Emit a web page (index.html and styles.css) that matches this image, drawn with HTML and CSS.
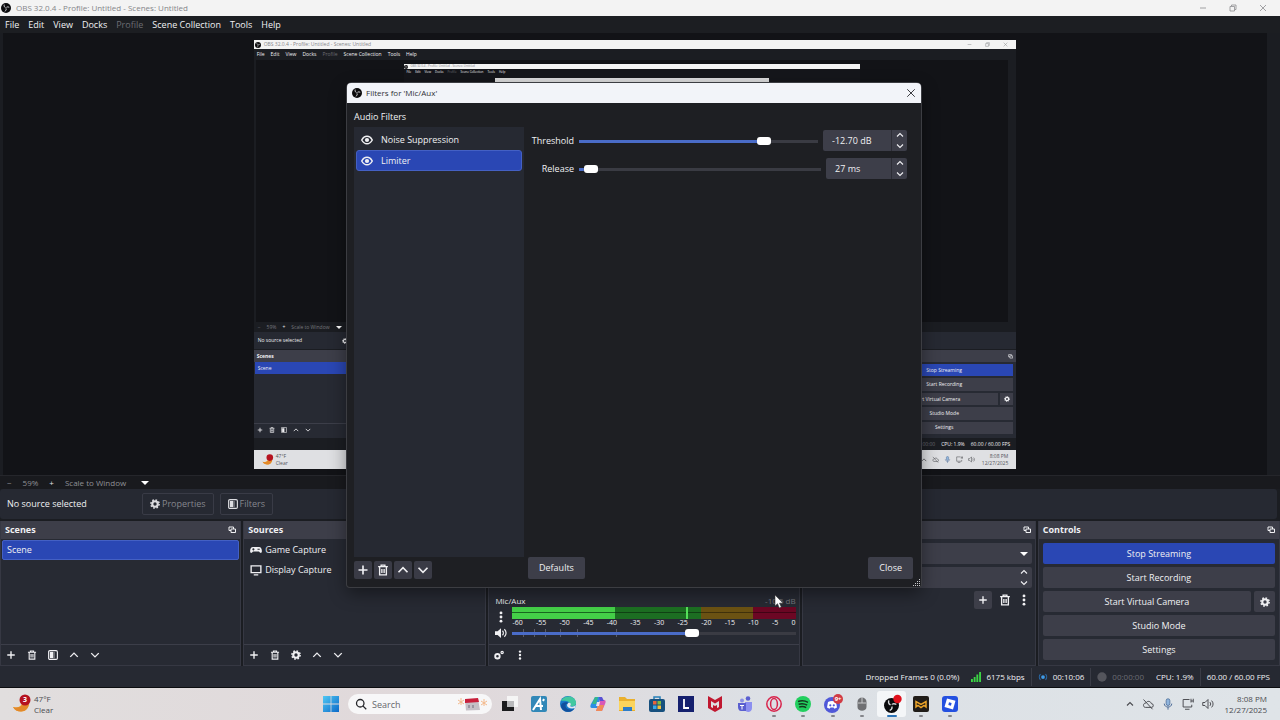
FILE: index.html
```
<!DOCTYPE html>
<html lang="en">
<head>
  <meta charset="UTF-8">
  <meta name="viewport" content="width=device-width, initial-scale=1.0">
  <title>OBS 32.0.4 - Profile: Untitled - Scenes: Untitled</title>
  <link rel="stylesheet" href="styles.css">
</head>
<body>

<!-- shared icons -->
<svg class="defs" aria-hidden="true">
  <symbol id="obs" viewBox="0 0 16 16"><circle cx="8" cy="8" r="8" fill="#0b0b0d"/><g fill="none" stroke="#d8d8dc" stroke-width="1.5" stroke-linecap="round"><path d="M5 3.2c-.6 2.4.6 4 3 4.4"/><path d="M12.6 6.6c-2.2-1-4-.4-4.8 1.4"/><path d="M6.6 13c1.8-1 2.4-2.800 1.400-4.800"/></g><circle cx="8" cy="8" r="1.300" fill="#0b0b0d"/></symbol>
  <symbol id="plus" viewBox="0 0 16 16"><path d="M8 2v12M2 8h12" stroke="currentColor" stroke-width="2.200" fill="none"/></symbol>
  <symbol id="trash" viewBox="0 0 16 16"><path d="M1.500 3.500h13M5.500 3V1.500h5V3M3.500 4v10.500h9V4M6.500 6.500v5.500M9.500 6.500v5.500" stroke="currentColor" stroke-width="1.800" fill="none"/></symbol>
  <symbol id="up" viewBox="0 0 16 16"><path d="M2 11l6-6 6 6" stroke="currentColor" stroke-width="2.200" fill="none"/></symbol>
  <symbol id="down" viewBox="0 0 16 16"><path d="M2 5l6 6 6-6" stroke="currentColor" stroke-width="2.200" fill="none"/></symbol>
  <symbol id="gear" viewBox="0 0 16 16"><circle cx="8" cy="8" r="4.400" fill="none" stroke="currentColor" stroke-width="3.400"/><circle cx="8" cy="8" r="6.600" fill="none" stroke="currentColor" stroke-width="2.400" stroke-dasharray="2.600 2.580"/></symbol>
  <symbol id="filter" viewBox="0 0 16 16"><rect x="1" y="1" width="14" height="14" rx="2" fill="none" stroke="currentColor" stroke-width="1.800"/><path d="M3 3h5v10H3z" fill="currentColor"/><path d="M8 3h3v10H8z" fill="currentColor" opacity=".4"/></symbol>
  <symbol id="dots" viewBox="0 0 16 16"><g fill="currentColor"><circle cx="8" cy="2.500" r="1.900"/><circle cx="8" cy="8" r="1.900"/><circle cx="8" cy="13.500" r="1.900"/></g></symbol>
  <symbol id="float" viewBox="0 0 16 16"><path d="M11 6V2H2v7h4M6 6h9v7H6z" stroke="currentColor" stroke-width="2" fill="none"/></symbol>
  <symbol id="eye" viewBox="0 0 16 16"><path d="M1 8c1.800-3.500 4-5 7-5s5.200 1.500 7 5c-1.800 3.500-4 5-7 5s-5.200-1.500-7-5z" fill="none" stroke="currentColor" stroke-width="2"/><circle cx="8" cy="8" r="2.800" fill="currentColor"/></symbol>
  <symbol id="close" viewBox="0 0 16 16"><path d="M2 2l12 12M14 2L2 14" stroke="currentColor" stroke-width="1.500"/></symbol>
  <symbol id="min" viewBox="0 0 16 16"><path d="M2 8h12" stroke="currentColor" stroke-width="1.500"/></symbol>
  <symbol id="max" viewBox="0 0 16 16"><path d="M5 4V2h9v9h-2M2 5h9v9H2z" fill="none" stroke="currentColor" stroke-width="1.500"/></symbol>
  <symbol id="moon" viewBox="0 0 20 20"><path d="M17 7c.8 6-2.500 10.500-8 10.500C5.500 17.500 2.500 16 1 13c5 1.500 9-.5 10-7z" fill="#f0a02c"/><path d="M1 13c5 1.500 9-.5 10-3 2 1.500 4 .5 6-1-.4 5-3.500 8.500-8 8.500C5.500 17.500 2.500 16 1 13z" fill="#e2892a"/><circle cx="13" cy="6" r="5.500" fill="#b5121f"/></symbol>
  <symbol id="cloud" viewBox="0 0 16 16"><path d="M4.500 12.500h8a2.500 2.500 0 000-5C12 4.500 7 3 5.500 6.500 1 6.500 1 12.500 4.500 12.500zM2 2l12 13" fill="none" stroke="currentColor" stroke-width="1.300"/></symbol>
  <symbol id="mic" viewBox="0 0 16 16"><rect x="5.500" y="1" width="5" height="9" rx="2.500" fill="#8fb4dc" stroke="#4a6a96"/><path d="M3 7.500c0 6 10 6 10 0M8 12v3.500" fill="none" stroke="#4a6a96" stroke-width="1.300"/></symbol>
  <symbol id="net" viewBox="0 0 16 16"><path d="M10 2H1.500v10H13V9M4 15h6M12 1v5M15 1v5M12 4h3" fill="none" stroke="currentColor" stroke-width="1.300"/></symbol>
  <symbol id="sound" viewBox="0 0 16 16"><path d="M1 6h3l4-4v12l-4-4H1z" fill="none" stroke="currentColor" stroke-width="1.300"/><path d="M10.500 5.500c1.400 1.500 1.400 3.500 0 5M12.800 3.500c2.600 2.500 2.600 6.500 0 9" fill="none" stroke="currentColor" stroke-width="1.300"/></symbol>
</svg>

<header class="titlebar">
  <svg class="i10"><use href="#obs"/></svg>
  <span>OBS 32.0.4 - Profile: Untitled - Scenes: Untitled</span>
  <div class="winbuttons">
    <button aria-label="Minimize"><svg class="i8"><use href="#min"/></svg></button>
    <button aria-label="Restore"><svg class="i8"><use href="#max"/></svg></button>
    <button aria-label="Close"><svg class="i8"><use href="#close"/></svg></button>
  </div>
</header>

<nav class="menubar">
  <button>File</button><button>Edit</button><button>View</button><button>Docks</button><button class="off">Profile</button><button>Scene Collection</button><button>Tools</button><button>Help</button>
</nav>

<main class="preview">
  <div class="mini">
    <div class="mini-title"><svg class="i6"><use href="#obs"/></svg><span>OBS 32.0.4 - Profile: Untitled - Scenes: Untitled</span>
      <div class="mini-win"><svg class="i5"><use href="#min"/></svg><svg class="i5"><use href="#max"/></svg><svg class="i5"><use href="#close"/></svg></div>
    </div>
    <div class="mini-menu"><span>File</span><span>Edit</span><span>View</span><span>Docks</span><span class="off">Profile</span><span>Scene Collection</span><span>Tools</span><span>Help</span></div>
    <div class="mini-preview">
      <div class="micro">
        <div class="micro-title"><svg class="i4"><use href="#obs"/></svg><span>OBS 32.0.4 - Profile: Untitled - Scenes: Untitled</span></div>
        <div class="micro-menu"><span>File</span><span>Edit</span><span>View</span><span>Docks</span><span class="off">Profile</span><span>Scene Collection</span><span>Tools</span><span>Help</span></div>
        <div class="nano"></div>
      </div>
    </div>
    <div class="mini-zoom"><span>−</span><span>59%</span><span class="lit">+</span><span>Scale to Window</span><i class="caret"></i></div>
    <div class="mini-context"><span>No source selected</span><svg class="i6"><use href="#gear"/></svg></div>
    <div class="mini-docks">
      <div class="mini-dock">
        <div class="mini-head">Scenes</div>
        <div class="mini-scene">Scene</div>
        <div class="mini-tools"><svg class="i6"><use href="#plus"/></svg><svg class="i6"><use href="#trash"/></svg><svg class="i6"><use href="#filter"/></svg><svg class="i6"><use href="#up"/></svg><svg class="i6"><use href="#down"/></svg></div>
      </div>
      <div class="mini-dock wide"><div class="mini-head"></div></div>
      <div class="mini-dock">
        <div class="mini-head">Controls<svg class="i5"><use href="#float"/></svg></div>
        <div class="mini-controls">
          <span class="blue">Stop Streaming</span>
          <span>Start Recording</span>
          <div><span>Start Virtual Camera</span><span class="cam"><svg class="i6"><use href="#gear"/></svg></span></div>
          <span>Studio Mode</span>
          <span>Settings</span>
        </div>
      </div>
    </div>
    <div class="mini-status"><span class="off">00:00:00</span><span>CPU: 1.9%</span><span>60.00 / 60.00 FPS</span></div>
    <div class="mini-taskbar">
      <svg class="i12"><use href="#moon"/></svg>
      <p>47°F<br>Clear</p>
      <div class="mini-tray"><svg class="i6"><use href="#up"/></svg><svg class="i7"><use href="#cloud"/></svg><svg class="i7"><use href="#mic"/></svg><svg class="i7"><use href="#net"/></svg><svg class="i7"><use href="#sound"/></svg></div>
      <p class="right">8:08 PM<br>12/27/2025</p>
    </div>
  </div>
</main>

<div class="zoombar">
  <button aria-label="Zoom out">−</button><span>59%</span><button class="lit" aria-label="Zoom in">+</button>
  <button class="scale">Scale to Window <i class="caret"></i></button>
</div>

<section class="context">
  <span class="label">No source selected</span>
  <button disabled><svg class="i10"><use href="#gear"/></svg>Properties</button>
  <button disabled><svg class="i10"><use href="#filter"/></svg>Filters</button>
</section>

<div class="docks">
  <section class="dock">
    <h2>Scenes<svg class="i8"><use href="#float"/></svg></h2>
    <ul class="scenes"><li>Scene</li></ul>
    <div class="tools">
      <button aria-label="Add scene"><svg class="i10"><use href="#plus"/></svg></button>
      <button aria-label="Remove scene"><svg class="i10"><use href="#trash"/></svg></button>
      <button aria-label="Scene filters"><svg class="i10"><use href="#filter"/></svg></button>
      <button aria-label="Move scene up"><svg class="i10"><use href="#up"/></svg></button>
      <button aria-label="Move scene down"><svg class="i10"><use href="#down"/></svg></button>
    </div>
  </section>

  <section class="dock">
    <h2>Sources</h2>
    <ul class="sources">
      <li><svg class="i12" viewBox="0 0 16 16"><path d="M4 4h8c3 0 4 3 3.800 6-.3 3-2.500 2-3.800 0H4c-1.300 2-3.500 3-3.800 0C0 7 1 4 4 4z" fill="currentColor"/><path d="M3 7h3M4.500 5.500v3M10 7h3" stroke="#272a33" stroke-width="1.400"/></svg>Game Capture</li>
      <li><svg class="i12" viewBox="0 0 16 16"><path d="M1.500 2.500h13v9h-13zM5 14.500h6" fill="none" stroke="currentColor" stroke-width="1.800"/></svg>Display Capture</li>
    </ul>
    <div class="tools">
      <button aria-label="Add source"><svg class="i10"><use href="#plus"/></svg></button>
      <button aria-label="Remove source"><svg class="i10"><use href="#trash"/></svg></button>
      <button aria-label="Source properties"><svg class="i10"><use href="#gear"/></svg></button>
      <button aria-label="Move source up"><svg class="i10"><use href="#up"/></svg></button>
      <button aria-label="Move source down"><svg class="i10"><use href="#down"/></svg></button>
    </div>
  </section>

  <section class="dock">
    <h2>Audio Mixer</h2>
    <div class="mixer">
      <div class="channel"><span>Mic/Aux</span><span class="db">-10.5 dB</span></div>
      <div class="strip">
        <button aria-label="Mic options"><svg class="i12"><use href="#dots"/></svg></button>
        <div>
          <div class="meter"><i class="level"></i><i class="low"></i><i class="peak"></i><i class="low2"></i><i class="mid"></i><i class="high"></i></div>
          <div class="ticks"><span>-60</span><span>-55</span><span>-50</span><span>-45</span><span>-40</span><span>-35</span><span>-30</span><span>-25</span><span>-20</span><span>-15</span><span>-10</span><span>-5</span><span>0</span></div>
        </div>
      </div>
      <div class="strip">
        <button aria-label="Mute"><svg class="i12" viewBox="0 0 16 16"><path d="M0 5.500h3.500L8 1.500v13l-4.500-4H0z" fill="currentColor"/><path d="M10 5c1.500 1.500 1.500 4.500 0 6M12.500 3c3 2.800 3 7.200 0 10" fill="none" stroke="currentColor" stroke-width="1.600"/></svg></button>
        <div class="fader">
          <i></i><i></i><i></i><i></i><i></i><i></i>
          <input type="range" min="0" max="100" value="64" aria-label="Mic/Aux volume" style="--fill: 64%">
        </div>
      </div>
    </div>
    <div class="tools">
      <button aria-label="Audio settings"><svg class="i10" viewBox="0 0 16 16"><circle cx="5.500" cy="10" r="3.600" fill="none" stroke="currentColor" stroke-width="3"/><circle cx="13" cy="4" r="1.800" fill="none" stroke="currentColor" stroke-width="2"/></svg></button>
      <button aria-label="Mixer menu"><svg class="i10"><use href="#dots"/></svg></button>
    </div>
  </section>

  <section class="dock">
    <h2>Transitions<svg class="i8"><use href="#float"/></svg></h2>
    <div class="transitions">
      <button class="field" aria-label="Transition"><i class="caret"></i></button>
      <div class="field spin"><div class="steps"><button aria-label="Longer"><svg class="i8"><use href="#up"/></svg></button><button aria-label="Shorter"><svg class="i8"><use href="#down"/></svg></button></div></div>
      <div class="row">
        <button class="filled" aria-label="Add transition"><svg class="i10"><use href="#plus"/></svg></button>
        <button aria-label="Remove transition"><svg class="i12"><use href="#trash"/></svg></button>
        <button aria-label="Transition menu"><svg class="i12"><use href="#dots"/></svg></button>
      </div>
    </div>
  </section>

  <section class="dock">
    <h2>Controls<svg class="i8"><use href="#float"/></svg></h2>
    <div class="controls">
      <button class="blue">Stop Streaming</button>
      <button>Start Recording</button>
      <div class="camera"><button>Start Virtual Camera</button><button aria-label="Camera settings"><svg class="i10"><use href="#gear"/></svg></button></div>
      <button>Studio Mode</button>
      <button>Settings</button>
    </div>
  </section>
</div>

<footer class="status">
  <span>Dropped Frames 0 (0.0%)</span>
  <span><svg class="i10" viewBox="0 0 16 16"><path d="M0 11h3v5H0zM4.300 8h3v8h-3zM8.600 4h3v12h-3zM13 0h3v16h-3z" fill="#3bd444"/></svg>6175 kbps</span>
  <span class="sep"><svg class="i10" viewBox="0 0 16 16"><circle cx="8" cy="8" r="3" fill="#3f9be8"/><path d="M4 3.500c-2.500 2.500-2.500 6.500 0 9M12 3.500c2.500 2.500 2.500 6.500 0 9" fill="none" stroke="#286aa8" stroke-width="1.800"/></svg>00:10:06</span>
  <span class="sep off"><svg class="i10" viewBox="0 0 16 16"><circle cx="8" cy="8" r="7.500" fill="#54555c"/></svg>00:00:00</span>
  <span>CPU: 1.9%</span>
  <span class="sep">60.00 / 60.00 FPS</span>
</footer>

<div class="taskbar">
  <div class="weather"><span class="badge-icon"><svg class="i20"><use href="#moon"/></svg><b>3</b></span><p>47°F<br>Clear</p></div>
  <div class="apps">
    <button aria-label="Start"><svg class="i16" viewBox="0 0 16 16"><defs><linearGradient id="win" x2="1" y2="1"><stop stop-color="#4fc8f4"/><stop offset="1" stop-color="#0c69c8"/></linearGradient></defs><path d="M0 0h7.600v7.600H0zM8.400 0H16v7.600H8.400zM0 8.400h7.600V16H0zM8.400 8.400H16V16H8.400z" fill="url(#win)"/></svg></button>
    <label class="search">
      <svg class="i12" viewBox="0 0 16 16"><circle cx="7" cy="7" r="5" fill="none" stroke="#26272b" stroke-width="1.700"/><path d="M10.500 10.500L15 15" stroke="#26272b" stroke-width="1.700"/></svg>
      <input type="text" placeholder="Search" aria-label="Search">
      <svg class="calendar" viewBox="0 0 30 14"><path d="M4 1v7M1 3l6 4M7 3L1 7M27 2v7M24 4l6 4M30 4l-6 4" stroke="#f3b98c" stroke-width="1"/><path d="M8 3l13-1 2 11-14 .5z" fill="#c5bfc6"/><path d="M8 2l13-1 1 4-14 1z" fill="#c8203c"/><path d="M11 8h2v3h-2zM15 8h2v3h-2z" fill="#9a95a0"/></svg>
    </label>
    <div class="pinned">
      <button aria-label="Task view"><svg class="i16" viewBox="0 0 16 16"><path d="M5 0h11v11H5z" fill="#f5f5f5"/><path d="M0 5h5v6h7v4H0z" fill="#1b1b1d"/><path d="M5 5h7v6H5z" fill="#b9b9bb"/></svg></button>
      <button aria-label="Studio"><svg class="i16" viewBox="0 0 16 16"><rect width="16" height="16" rx="2" fill="#3288b8"/><path d="M2 14L9 3l1 11M4 10h8M13 3l-1 2" fill="none" stroke="#fff" stroke-width="2"/></svg></button>
      <button aria-label="Edge"><svg class="i16" viewBox="0 0 16 16"><circle cx="8" cy="8" r="8" fill="#1778c8"/><path d="M1 5c3-6 13-6 15 1 .5 4-3 5-6 4 2-4-4-6-9-5z" fill="#42c8a0"/><path d="M6 8c-2 4 3 7 8 5-4 5-12 3-13-3 0-4 7-5 8-2z" fill="#124f9c"/><path d="M8 7c2-1 4 1 2 3 1 1 4 1 6-1l-1 3c-4 1-8 0-8-3z" fill="#dfe8f0"/></svg></button>
      <button aria-label="Copilot"><svg class="i16" viewBox="0 0 16 16"><path d="M5 1h6L7 12H2c-2 0-2-2-1-4z" fill="#2c8fe4"/><path d="M2 8l3-7h3L6 8z" fill="#38b88a"/><path d="M10 4h4c2 0 2 2 1 4l-3 7H6z" fill="#d858b8"/><path d="M8 9h6l-2 6H6z" fill="#f08a58"/><path d="M9 1h3l2 4h-4z" fill="#5a50d4"/><path d="M7 6h3l-1 4H6z" fill="#e8e4ee"/></svg></button>
      <button aria-label="File Explorer"><svg class="i16" viewBox="0 0 16 16"><path d="M0 1h6l2 2h8v12H0z" fill="#eab02e"/><path d="M0 5h16v9H0z" fill="#fbd45c"/><path d="M4 11h9v4H4z" fill="#2d7cc8"/></svg></button>
      <button aria-label="Store"><svg class="i16" viewBox="0 0 16 16"><path d="M5 4V1h6v3" fill="none" stroke="#2780b8" stroke-width="1.500"/><rect y="3" width="16" height="13" rx="2" fill="#17507e"/><path d="M4 5h3.500v3.500H4z" fill="#e8633c"/><path d="M8.500 5H12v3.500H8.500z" fill="#7fba42"/><path d="M4 9.500h3.500V13H4z" fill="#38a8e8"/><path d="M8.500 9.500H12V13H8.500z" fill="#f4c038"/></svg></button>
      <button aria-label="L"><svg class="i16" viewBox="0 0 16 16"><path d="M0 0h16v16H0z" fill="#15206e"/><path d="M6 3v9h5" fill="none" stroke="#fff" stroke-width="1.800"/></svg></button>
      <button aria-label="McAfee"><svg class="i16" viewBox="0 0 16 16"><path d="M1 0l7 4 7-4v12l-7 4-7-4z" fill="#c01830"/><path d="M4 5l4 2.500L12 5v6l-4 2.300L4 11z" fill="#e0dfe2"/><path d="M6 9l2 1 2-1v4H6z" fill="#c01830"/></svg></button>
      <button aria-label="Teams"><svg class="i16" viewBox="0 0 16 16"><circle cx="11" cy="2.500" r="2.300" fill="#5a5fd0"/><circle cx="5" cy="4.500" r="2" fill="#8a8fe4"/><path d="M8 6h7v6c0 5-7 5-7 1z" fill="#8c8ff0"/><path d="M1 7h8v8H4c-2 0-3-2-3-4z" fill="#5a5fd0"/><path d="M3 9.500h4M5 9.500v4" stroke="#fff"/></svg></button>
      <button class="run" aria-label="Opera GX"><svg class="i16" viewBox="0 0 16 16"><circle cx="8" cy="8" r="7.200" fill="none" stroke="#d8244c" stroke-width="1.500"/><ellipse cx="8" cy="8" rx="3.400" ry="5.600" fill="none" stroke="#d8244c" stroke-width="1.500"/></svg></button>
      <button class="run" aria-label="Spotify"><svg class="i16" viewBox="0 0 16 16"><circle cx="8" cy="8" r="8" fill="#22cf5f"/><path d="M3 5.500c4-1.200 7-.8 10 .8M3.600 8.300c3-.9 6-.6 8.600.9M4.200 11c2.600-.7 5-.5 7 .7" fill="none" stroke="#14371f" stroke-width="1.500"/></svg></button>
      <button class="run" aria-label="Discord"><svg class="i20" viewBox="0 0 20 20"><circle cx="9" cy="11" r="8" fill="#5058d8"/><path d="M5 8c2.500-1.400 5.500-1.400 8 0l1 5.500-2.500 1.200-1-1.200h-3l-1 1.200L4 13.500z" fill="#fff"/><circle cx="7.300" cy="11.300" r="1.100" fill="#5058d8"/><circle cx="10.800" cy="11.300" r="1.100" fill="#5058d8"/><circle cx="15" cy="5" r="5" fill="#d13b45"/></svg><b>9+</b></button>
      <button class="run" aria-label="Mouse"><svg class="i16" viewBox="0 0 16 16"><path d="M3.500 6c0-6 9-6 9 0v5c0 5-9 5-9 0z" fill="#6f7073"/><path d="M8 1v6M4 7h8" stroke="#c9c9cc"/></svg></button>
      <button class="run active" aria-label="OBS"><svg class="i20" viewBox="0 0 20 20"><svg x="2" y="4" width="15" height="15"><use href="#obs"/></svg><circle cx="15.500" cy="5" r="4.200" fill="#e0101c"/></svg></button>
      <button class="run" aria-label="Medal"><svg class="i16" viewBox="0 0 16 16"><rect width="16" height="16" rx="2" fill="#201c18"/><path d="M3 11V5.500l5 3 5-3V11l-2-1.500-3 2-3-2z" fill="none" stroke="#eca428" stroke-width="1.500"/></svg></button>
      <button class="run" aria-label="Roblox"><svg class="i16" viewBox="0 0 16 16"><rect width="16" height="16" rx="3" fill="#2450e0"/><path d="M5 2.500l8.500 2.300L11 13.500 2.500 11z" fill="#fff"/><path d="M7 6.200l2.600.7L9 9.700l-2.700-.8z" fill="#2450e0"/></svg></button>
    </div>
  </div>
  <div class="tray">
    <svg class="i8"><use href="#up"/></svg><svg class="i12"><use href="#cloud"/></svg><svg class="i12"><use href="#mic"/></svg><svg class="i12"><use href="#net"/></svg><svg class="i12"><use href="#sound"/></svg>
    <p>8:08 PM<br>12/27/2025</p>
  </div>
</div>

<div class="dialog" role="dialog" aria-labelledby="dlg-title">
  <div class="dialog-title"><svg class="i10"><use href="#obs"/></svg><span id="dlg-title">Filters for 'Mic/Aux'</span><button aria-label="Close dialog"><svg class="i10"><use href="#close"/></svg></button></div>
  <div class="dialog-body">
    <div class="filters">
      <h3>Audio Filters</h3>
      <ul>
        <li><svg class="i12"><use href="#eye"/></svg>Noise Suppression</li>
        <li class="selected"><svg class="i12"><use href="#eye"/></svg>Limiter</li>
      </ul>
      <div class="filter-tools">
        <button aria-label="Add filter"><svg class="i12"><use href="#plus"/></svg></button>
        <button aria-label="Remove filter"><svg class="i12"><use href="#trash"/></svg></button>
        <button aria-label="Move filter up"><svg class="i12"><use href="#up"/></svg></button>
        <button aria-label="Move filter down"><svg class="i12"><use href="#down"/></svg></button>
      </div>
    </div>
    <div class="props">
      <div class="prop">
        <label for="threshold">Threshold</label>
        <input id="threshold" type="range" min="0" max="100" value="79" style="--fill: 79%">
        <div class="spin"><input type="text" value="-12.70 dB" size="8" aria-label="Threshold value"><div class="steps"><button aria-label="Raise threshold"><svg class="i8"><use href="#up"/></svg></button><button aria-label="Lower threshold"><svg class="i8"><use href="#down"/></svg></button></div></div>
      </div>
      <div class="prop">
        <label for="release">Release</label>
        <input id="release" type="range" min="0" max="100" value="2" style="--fill: 2%">
        <div class="spin short"><input type="text" value="27 ms" size="8" aria-label="Release value"><div class="steps"><button aria-label="Raise release"><svg class="i8"><use href="#up"/></svg></button><button aria-label="Lower release"><svg class="i8"><use href="#down"/></svg></button></div></div>
      </div>
      <div class="dialog-buttons"><button>Defaults</button><button>Close</button></div>
    </div>
  </div>
  <svg class="grip" viewBox="0 0 8 8"><path d="M6 0h1v1H6zM4 2h1v1H4zM6 2h1v1H6zM2 4h1v1H2zM4 4h1v1H4zM6 4h1v1H6zM0 6h1v1H0zM2 6h1v1H2zM4 6h1v1H4zM6 6h1v1H6z" fill="#c8c9cd"/></svg>
</div>

<svg class="cursor" viewBox="0 0 10 15"><path d="M1 1v11l2.500-2.300L5.300 14l2-.9-1.800-4H9z" fill="#fff" stroke="#333" stroke-width=".6"/></svg>

</body>
</html>
```

FILE: styles.css
```
* {
  box-sizing: border-box;
}
body {
  margin: 0;
  height: 100vh;
  display: flex;
  flex-direction: column;
  position: relative;
  overflow: hidden;
  background-color: #1b1d22;
  color: #f0f0f3;
  font-family: "Open Sans", "Noto Sans", sans-serif;
  font-size: 9px;
  line-height: 12px;
}
button, input {
  font: inherit;
  color: inherit;
  background: none;
  border: 0;
  margin: 0;
  padding: 0;
}
ul, p, h2, h3 {
  margin: 0;
  padding: 0;
  list-style: none;
  font-size: inherit;
}
svg {
  display: block;
  flex: none;
}
.defs { position: absolute; width: 0; height: 0; }
.i4 { width: 4px; height: 4px; }
.i5 { width: 5px; height: 5px; }
.i6 { width: 6px; height: 6px; }
.i7 { width: 7px; height: 7px; }
.i8 { width: 8px; height: 8px; }
.i10 { width: 10px; height: 10px; }
.i12 { width: 12px; height: 12px; }
.i16 { width: 16px; height: 16px; }
.i20 { width: 20px; height: 20px; }
.off { color: #6b6c72; }
.lit { color: #e4e4e8; }
.caret {
  display: inline-block;
  border: 4px solid transparent;
  border-top-color: #fff;
  border-bottom: 0;
}

/* window frame */
.titlebar {
  height: 16px;
  display: flex;
  align-items: center;
  gap: 5px;
  padding: 0 13px 0 1px;
  background-color: #f3f3f3;
  color: #85868a;
  font-size: 8px;
}
.winbuttons {
  margin-left: auto;
  display: flex;
  gap: 22px;
}
.menubar {
  height: 17px;
  display: flex;
  gap: 9px;
  padding: 0 5px;
  background-color: #1c1e22;
}
.preview {
  flex: 1;
  min-height: 0;
  margin: 0 13px 0 3px;
  padding: 7px 0 6px;
  display: flex;
  justify-content: center;
  background-color: #121317;
}

/* captured desktop inside the preview */
.mini {
  height: 100%;
  aspect-ratio: 16 / 9;
  display: flex;
  flex-direction: column;
  overflow: hidden;
  background-color: #1b1d22;
  font-size: 5px;
  line-height: 7px;
}
.mini-title {
  height: 9px;
  display: flex;
  align-items: center;
  gap: 3px;
  padding: 0 8px 0 1px;
  background-color: #f3f3f3;
  color: #85868a;
}
.mini-win {
  margin-left: auto;
  display: flex;
  gap: 13px;
}
.mini-menu {
  height: 11px;
  display: flex;
  align-items: center;
  gap: 6px;
  padding-left: 3px;
}
.mini-preview {
  flex: 1;
  min-height: 0;
  margin: 0 8px 0 2px;
  padding: 4px 0 2px;
  display: flex;
  justify-content: center;
  background-color: #121317;
}
.micro {
  height: 100%;
  aspect-ratio: 16 / 9;
  background-color: #15161b;
  font-size: 3px;
  line-height: 5px;
}
.micro-title {
  height: 5px;
  display: flex;
  align-items: center;
  gap: 2px;
  background-color: #f3f3f3;
  color: #85868a;
}
.micro-menu {
  display: flex;
  gap: 4px;
  padding: 1px 2px 3px;
}
.nano {
  width: 60%;
  height: 60%;
  margin: 0 auto;
  border-top: 4px solid #dcdcdd;
  background-color: #121317;
}
.mini-zoom {
  height: 10px;
  display: flex;
  align-items: center;
  gap: 6px;
  padding-left: 4px;
  color: #77787d;
}
.mini-zoom .caret { border-width: 3px 3px 0; }
.mini-context {
  height: 17px;
  display: flex;
  align-items: center;
  gap: 40px;
  padding-left: 4px;
  background-color: #262932;
}
.mini-docks {
  height: 89px;
  display: flex;
  gap: 1px;
  padding-top: 1px;
}
.mini-dock {
  flex: 242;
  display: flex;
  flex-direction: column;
  background-color: #272a33;
}
.mini-dock.wide { flex: 792; }
.mini-head {
  height: 12px;
  display: flex;
  align-items: center;
  justify-content: space-between;
  padding: 0 3px;
  background-color: #3d3e49;
  font-weight: bold;
}
.mini-scene {
  height: 12px;
  margin: 0 1px;
  padding: 3px;
  background-color: #2a47b4;
}
.mini-tools {
  margin-top: auto;
  display: flex;
  gap: 6px;
  padding: 3px 3px 5px;
  border-top: 1px solid #3c3e49;
}
.mini-controls {
  flex: 1;
  display: flex;
  flex-direction: column;
  gap: 2px;
  padding: 2px 3px 4px;
}
.mini-controls > *, .mini-controls div span {
  flex: 1;
  display: flex;
  align-items: center;
  justify-content: center;
}
.mini-controls span { background-color: #3d3e49; }
.mini-controls div { gap: 2px; }
.mini-controls div span { height: 100%; }
.mini-controls div .cam { flex: none; width: 13px; }
.mini-controls .blue { background-color: #2a47b4; }
.mini-status {
  height: 12px;
  display: flex;
  align-items: center;
  justify-content: flex-end;
  gap: 6px;
  padding-right: 6px;
}
.mini-taskbar {
  height: 19px;
  display: flex;
  align-items: center;
  gap: 2px;
  padding: 0 8px;
  background-color: #dfe0e3;
  color: #55565b;
}
.mini-tray {
  margin-left: auto;
  display: flex;
  align-items: center;
  gap: 5px;
  padding-right: 5px;
}
.right { text-align: right; }

.zoombar {
  height: 14px;
  display: flex;
  align-items: center;
  gap: 11px;
  padding-left: 7px;
  border-top: 1px solid #25262b;
  background-color: #191a1e;
  color: #8f9095;
  font-size: 8px;
}
.scale {
  display: flex;
  align-items: center;
  gap: 15px;
}
.context {
  height: 30px;
  margin: 0 3px 2px 0;
  display: flex;
  align-items: center;
  gap: 6px;
  padding-left: 7px;
  border-radius: 3px;
  background-color: #262932;
}
.context .label { width: 129px; }
.context button {
  height: 22px;
  display: flex;
  align-items: center;
  gap: 2px;
  padding: 0 7px;
  border: 1px solid #393b46;
  border-radius: 2px;
  color: #85868d;
}
.context svg { color: #dcdce0; }

/* docks */
.docks {
  height: 145px;
  display: grid;
  grid-template-columns: 241fr 243fr 311fr 234fr 242fr;
  gap: 2px;
}
.dock {
  min-width: 0;
  display: flex;
  flex-direction: column;
  border: 1px solid #363843;
  border-top: 0;
  background-color: #272a33;
}
.dock h2 {
  height: 18px;
  display: flex;
  align-items: center;
  justify-content: space-between;
  padding: 0 4px;
  background-color: #3d3e49;
}
.scenes li {
  margin: 1px;
  padding: 3px 4px;
  border: 1px solid #4460c4;
  border-radius: 2px;
  background-color: #2a47b4;
}
.sources li {
  height: 20px;
  margin: 1px 6px 0;
  display: flex;
  align-items: center;
  gap: 3px;
}
.sources li + li { margin-top: 0; }
.tools {
  height: 21px;
  margin-top: auto;
  display: flex;
  align-items: center;
  gap: 11px;
  padding-left: 5px;
  border-top: 1px solid #3c3e49;
}
.mixer {
  flex: 1;
  display: flex;
  flex-direction: column;
  justify-content: flex-end;
  padding: 0 3px 5px 6px;
}
.channel {
  display: flex;
  justify-content: space-between;
  font-size: 8px;
}
.channel .db { color: #77787f; }
.strip {
  display: grid;
  grid-template-columns: 12px 1fr;
  align-items: center;
  gap: 5px;
}
.meter {
  height: 12px;
  display: flex;
  background-color: #1c6e22;
}
.level { flex: 103; background: linear-gradient(#44cf48 5px, #1a6620 5px, #1a6620 6px, #44cf48 6px); }
.low, .low2, .mid, .high { background: linear-gradient(transparent 5px, rgba(0, 0, 0, 0.4) 5px, rgba(0, 0, 0, 0.4) 6px, transparent 6px); }
.low { flex: 71; }
.low2 { flex: 13; }
.peak { width: 2px; background-color: #55e05a; }
.mid { flex: 52; background-color: #6b5213; }
.high { flex: 43; background-color: #6c0724; }
.ticks {
  display: flex;
  justify-content: space-between;
  font-size: 7px;
  line-height: 8px;
}
input[type="range"] {
  appearance: none;
  min-width: 0;
  height: 8px;
  background: linear-gradient(#4a6cc8, #4a6cc8) 0 3px / var(--fill) 3px no-repeat, linear-gradient(#3a3b43, #3a3b43) 0 3px / 100% 3px no-repeat;
}
input[type="range"]::-webkit-slider-thumb {
  appearance: none;
  width: 14px;
  height: 8px;
  border-radius: 3px;
  background-color: #fff;
}
/* scale marks share one grid row with the slider above them */
.fader {
  display: grid;
  grid-template-columns: 4fr 4fr 4fr 5fr 6fr 14fr 63fr;
  align-items: center;
}
.fader i {
  grid-row: 1;
  height: 8px;
  border-right: 1px solid #5a5c68;
}
.fader i:nth-child(1) { grid-column: 1; }
.fader i:nth-child(2) { grid-column: 2; }
.fader i:nth-child(3) { grid-column: 3; }
.fader i:nth-child(4) { grid-column: 4; }
.fader i:nth-child(5) { grid-column: 5; }
.fader i:nth-child(6) { grid-column: 6; }
.fader input {
  grid-row: 1;
  grid-column: 1 / -1;
}
.transitions {
  display: flex;
  flex-direction: column;
  gap: 3px;
  padding: 4px 3px;
}
.field {
  height: 21px;
  display: flex;
  align-items: center;
  justify-content: flex-end;
  padding-right: 4px;
  border-radius: 2px;
  background-color: #3d3e49;
}
.row {
  display: flex;
  justify-content: flex-end;
  gap: 7px;
  padding-right: 2px;
}
.filled {
  padding: 4px;
  border-radius: 2px;
  background-color: #3d3e49;
}
.controls {
  display: flex;
  flex-direction: column;
  gap: 3px;
  padding: 4px;
}
.controls button {
  height: 21px;
  border-radius: 2px;
  background-color: #3d3e49;
}
.controls .blue { background-color: #2a47b4; }
.camera {
  display: grid;
  grid-template-columns: 1fr 21px;
  gap: 3px;
}
.camera svg { margin: auto; }
.status {
  height: 22px;
  display: flex;
  justify-content: flex-end;
  align-items: center;
  padding: 0 4px;
  border-bottom: 1px solid #0c0d10;
  background-color: #262932;
  font-size: 8px;
}
.status span {
  height: 18px;
  display: flex;
  align-items: center;
  gap: 5px;
  padding: 0 6px;
}
.status .sep { border-left: 1px solid #3a3c46; }

/* taskbar */
.taskbar {
  height: 32px;
  display: grid;
  grid-template-columns: 1fr auto 1fr;
  align-items: center;
  padding-left: 8px;
  background: linear-gradient(90deg, #e1dede, #e0d8da 35%, #dce0e5 60%, #dfe4e8);
  color: #4a4b50;
  font-size: 8px;
  line-height: 11px;
}
.weather {
  display: flex;
  align-items: center;
  gap: 2px;
  padding-left: 4px;
}
.badge-icon, .run { position: relative; }
.badge-icon b {
  position: absolute;
  left: 11px;
  top: 0;
  color: #fff;
  font-size: 7px;
}
.apps {
  display: flex;
  align-items: center;
}
.search {
  width: 144px;
  height: 20px;
  margin: 0 3px 0 9px;
  display: flex;
  align-items: center;
  gap: 5px;
  padding: 0 5px 0 7px;
  border-radius: 10px;
  background-color: #f7f7f8;
  font-size: 9px;
}
.search input { flex: 1; min-width: 0; }
.search input::placeholder { color: #66676c; }
.calendar { width: 30px; height: 14px; }
.pinned {
  width: 470px;
  display: flex;
}
.pinned button {
  flex: 1;
  height: 26px;
  display: flex;
  align-items: center;
  justify-content: center;
}
.pinned b {
  position: absolute;
  right: 6px;
  top: 3px;
  color: #fff;
  font-size: 6px;
  line-height: 10px;
}
.run::after {
  content: "";
  position: absolute;
  bottom: 0;
  width: 4px;
  height: 2px;
  border-radius: 1px;
  background-color: #85868b;
}
.pinned .active {
  border-radius: 3px;
  background-color: #f4f6f8;
}
.active::after { width: 10px; background-color: #2c74b8; }
.tray {
  display: flex;
  align-items: center;
  justify-content: flex-end;
  gap: 8px;
  padding-right: 13px;
}
.tray p {
  padding-left: 3px;
  text-align: right;
}

/* filters dialog, sits over the main window */
.dialog {
  position: absolute;
  top: 83px;
  right: 359px;
  bottom: 133px;
  left: 347px;
  display: flex;
  flex-direction: column;
  border-radius: 5px 5px 3px 3px;
  background-color: #1e1f23;
  box-shadow: 0 0 0 1px #3c3d42, 0 6px 18px rgba(0, 0, 0, 0.45);
}
.dialog-title {
  height: 20px;
  display: flex;
  align-items: center;
  gap: 4px;
  padding: 0 5px;
  border-radius: 4px 4px 0 0;
  background-color: #f2f4f9;
  color: #303136;
  font-size: 8px;
}
.dialog-title button { margin-left: auto; }
.dialog-body {
  flex: 1;
  display: grid;
  grid-template-columns: 170px 1fr;
  gap: 4px;
  padding: 8px 8px 8px 7px;
}
.filters {
  display: flex;
  flex-direction: column;
}
.filters h3 {
  height: 16px;
  font-weight: normal;
}
.filters ul {
  flex: 1;
  padding: 2px;
  background-color: #262932;
}
.filters li {
  height: 21px;
  display: flex;
  align-items: center;
  gap: 8px;
  padding-left: 4px;
  border: 1px solid transparent;
  border-radius: 3px;
}
.filters .selected {
  border-color: #4460c4;
  background-color: #2a47b4;
}
.filter-tools {
  display: flex;
  gap: 2px;
  padding-top: 4px;
}
.filter-tools button {
  padding: 3px;
  border-radius: 2px;
  background-color: #3a3b46;
}
.props {
  display: flex;
  flex-direction: column;
  gap: 7px;
  padding-top: 19px;
}
.prop {
  display: grid;
  grid-template-columns: 46px 1fr auto;
  align-items: center;
  gap: 5px;
  padding-right: 6px;
}
.prop label { text-align: right; }
.spin {
  height: 21px;
  display: flex;
  border-radius: 2px;
  background-color: #3d3e49;
}
.prop .spin { width: 84px; }
.prop .short { width: 81px; }
.spin input {
  flex: 1;
  min-width: 0;
  padding-left: 9px;
}
.steps {
  width: 16px;
  display: flex;
  flex-direction: column;
  align-items: center;
  justify-content: space-around;
  border-left: 1px solid #2c2d35;
}
.field .steps { border: 0; height: 100%; width: 8px; }
.dialog-buttons {
  margin-top: auto;
  display: flex;
  justify-content: space-between;
}
.dialog-buttons button {
  height: 22px;
  padding: 0 11px;
  border-radius: 2px;
  background-color: #3d3e49;
}
.grip {
  position: absolute;
  right: 0;
  bottom: 0;
  width: 8px;
  height: 8px;
}
.cursor {
  position: absolute;
  left: 774px;
  top: 594px;
  width: 10px;
  height: 15px;
}
```
